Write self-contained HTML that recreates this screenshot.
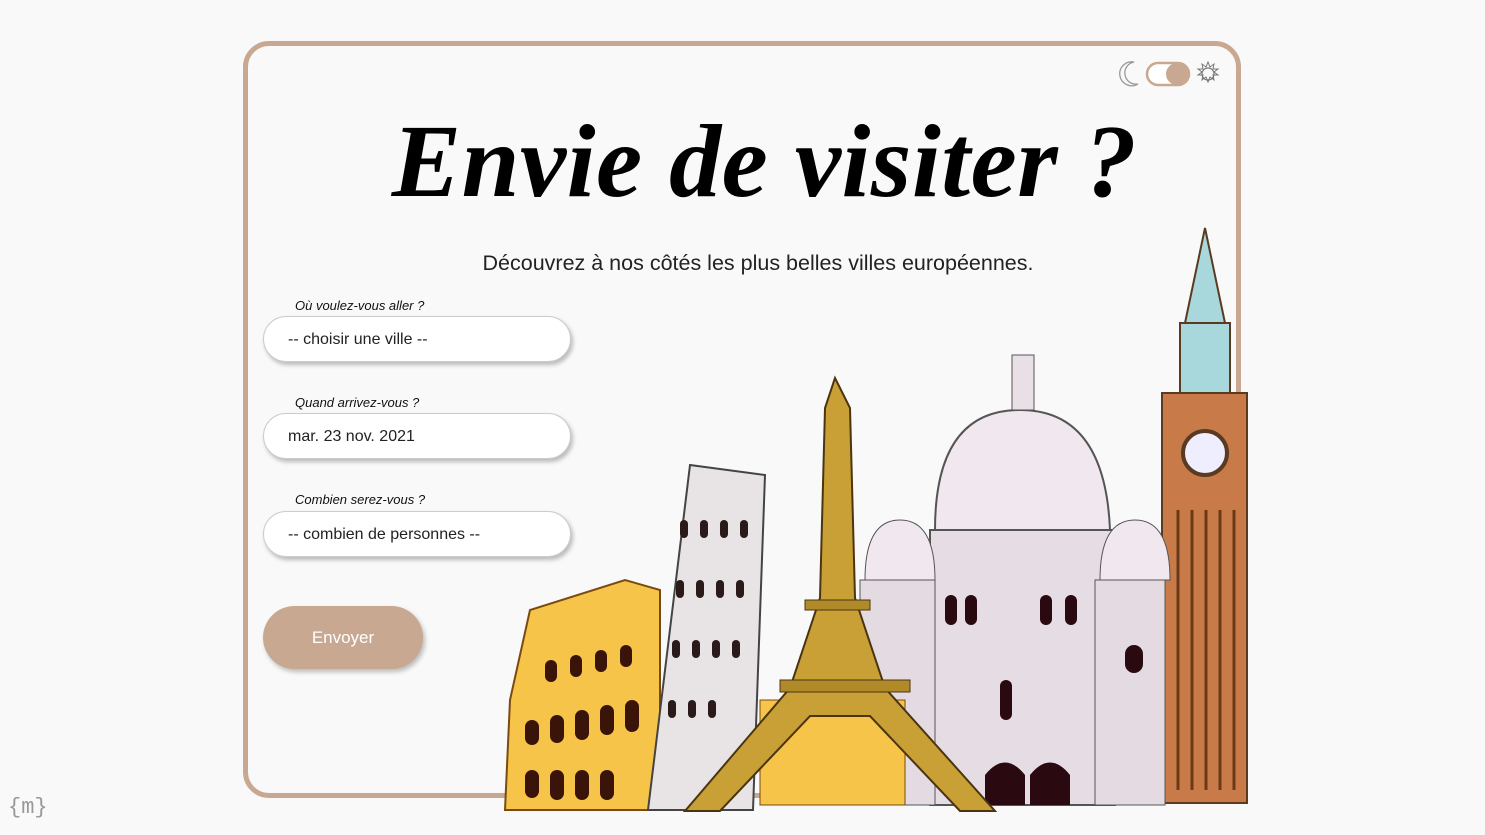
<!DOCTYPE html>
<html><head><meta charset="utf-8"><style>
html,body{margin:0;padding:0;width:1485px;height:835px;background:#f9f9f9;overflow:hidden;font-family:"Liberation Sans",sans-serif;position:relative}
.card{position:absolute;left:243px;top:41px;width:988px;height:747px;border:5px solid #c8a890;border-radius:26px;background:#f9f9f9}
h1{position:absolute;left:22px;width:1485px;top:102px;margin:0;text-align:center;font-family:"Liberation Serif",serif;font-style:italic;font-weight:bold;font-size:104px;letter-spacing:0.5px;color:#000}
.sub{position:absolute;left:0;width:1516px;top:251px;text-align:center;font-size:21.5px;color:#222}
.lbl{position:absolute;left:295px;font-size:13px;font-style:italic;color:#111}
.inp{position:absolute;left:263px;width:308px;height:46px;border:1px solid #ccc;border-radius:24px;background:#fff;box-shadow:2px 3px 4px rgba(0,0,0,.25);box-sizing:border-box;padding-left:24px;line-height:46px;font-size:16px;color:#222}
.btn{position:absolute;left:263px;top:606px;width:160px;height:63px;border-radius:32px;background:#c8a890;color:#fff;font-size:17px;text-align:center;line-height:63px;box-shadow:2px 3px 5px rgba(0,0,0,.25)}
.logo{position:absolute;left:8px;top:795px;font-size:22px;color:#999;font-family:"Liberation Mono",monospace}
</style></head><body>
<div class="card"></div>
<svg style="position:absolute;left:1110px;top:58px" width="120" height="32">
<path d="M24 4a12 12 0 1 0 4 22a11 11 0 0 1 -4 -22z" fill="none" stroke="#999" stroke-width="1.3"/>
<rect x="37" y="5" width="42" height="22" rx="11" fill="#fff" stroke="#c8a890" stroke-width="2.5"/>
<circle cx="67" cy="16" r="11" fill="#c8a890"/>
<circle cx="98" cy="16" r="6" fill="none" stroke="#777" stroke-width="1.2"/>
<path d="M98 4l2 5 4-3-1 5 5 0-4 3 4 3-5 0 1 5-4-3-2 5-2-5-4 3 1-5-5 0 4-3-4-3 5 0-1-5 4 3z" fill="none" stroke="#777" stroke-width="1"/>
</svg>
<h1>Envie de visiter ?</h1>
<div class="sub">Découvrez à nos côtés les plus belles villes européennes.</div>
<div class="lbl" style="top:298px">Où voulez-vous aller ?</div>
<div class="inp" style="top:316px">-- choisir une ville --</div>
<div class="lbl" style="top:395px">Quand arrivez-vous ?</div>
<div class="inp" style="top:413px">mar. 23 nov. 2021</div>
<div class="lbl" style="top:492px">Combien serez-vous ?</div>
<div class="inp" style="top:511px">-- combien de personnes --</div>
<div class="btn">Envoyer</div>
<svg style="position:absolute;left:0;top:0" width="1485" height="835">
<path d="M1205 228l-20 95h40z" fill="#a8d8dc" stroke="#5a3a20" stroke-width="2"/>
<rect x="1180" y="323" width="50" height="70" fill="#a8d8dc" stroke="#5a3a20" stroke-width="2"/>
<rect x="1162" y="393" width="85" height="410" fill="#c87a48" stroke="#5a3a20" stroke-width="2"/>
<circle cx="1205" cy="453" r="22" fill="#eef" stroke="#5a3a20" stroke-width="4"/>
<g stroke="#6a3a18" stroke-width="3">
<path d="M1178 510v280M1192 510v280M1206 510v280M1220 510v280M1234 510v280"/></g>
<path d="M935 530q0-120 85-120q85 0 90 120z" fill="#f0e8ee" stroke="#555" stroke-width="2"/>
<rect x="1012" y="355" width="22" height="55" fill="#e8e0e6" stroke="#555"/>
<rect x="930" y="530" width="185" height="275" fill="#e6dde4" stroke="#555" stroke-width="2"/>
<path d="M865 580q0-60 35-60q35 0 35 60z" fill="#f0e8ee" stroke="#555"/>
<path d="M1100 580q0-60 35-60q35 0 35 60z" fill="#f0e8ee" stroke="#555"/>
<rect x="860" y="580" width="75" height="225" fill="#e4dae2" stroke="#555"/>
<rect x="1095" y="580" width="70" height="225" fill="#e4dae2" stroke="#555"/>
<g fill="#2a0a10"><rect x="945" y="595" width="12" height="30" rx="6"/><rect x="965" y="595" width="12" height="30" rx="6"/><rect x="1040" y="595" width="12" height="30" rx="6"/><rect x="1065" y="595" width="12" height="30" rx="6"/><rect x="1000" y="680" width="12" height="40" rx="6"/><path d="M985 805v-30q20-25 40 0v30z"/><path d="M1030 805v-30q20-25 40 0v30z"/><rect x="1125" y="645" width="18" height="28" rx="9"/></g>
<path d="M510 700l20-90 95-30 35 10v220l-155 0z" fill="#f5c448" stroke="#7a4a10" stroke-width="2"/>
<g fill="#3a1408"><rect x="525" y="720" width="14" height="25" rx="7"/><rect x="550" y="715" width="14" height="28" rx="7"/><rect x="575" y="710" width="14" height="30" rx="7"/><rect x="600" y="705" width="14" height="30" rx="7"/><rect x="625" y="700" width="14" height="32" rx="7"/><rect x="525" y="770" width="14" height="28" rx="7"/><rect x="550" y="770" width="14" height="30" rx="7"/><rect x="575" y="770" width="14" height="30" rx="7"/><rect x="600" y="770" width="14" height="30" rx="7"/><rect x="545" y="660" width="12" height="22" rx="6"/><rect x="570" y="655" width="12" height="22" rx="6"/><rect x="595" y="650" width="12" height="22" rx="6"/><rect x="620" y="645" width="12" height="22" rx="6"/></g>
<path d="M690 465l75 10-12 335h-105z" fill="#e8e4e6" stroke="#444" stroke-width="2"/>
<g fill="#2a1a1a"><rect x="680" y="520" width="8" height="18" rx="4"/><rect x="700" y="520" width="8" height="18" rx="4"/><rect x="720" y="520" width="8" height="18" rx="4"/><rect x="740" y="520" width="8" height="18" rx="4"/><rect x="676" y="580" width="8" height="18" rx="4"/><rect x="696" y="580" width="8" height="18" rx="4"/><rect x="716" y="580" width="8" height="18" rx="4"/><rect x="736" y="580" width="8" height="18" rx="4"/><rect x="672" y="640" width="8" height="18" rx="4"/><rect x="692" y="640" width="8" height="18" rx="4"/><rect x="712" y="640" width="8" height="18" rx="4"/><rect x="732" y="640" width="8" height="18" rx="4"/><rect x="668" y="700" width="8" height="18" rx="4"/><rect x="688" y="700" width="8" height="18" rx="4"/><rect x="708" y="700" width="8" height="18" rx="4"/></g>
<rect x="760" y="700" width="145" height="105" fill="#f5c448" stroke="#7a4a10"/>
<path d="M835 378l-10 30-5 190-30 90-105 123h35l90-95 60 0 90 95h35l-110-123-30-90-5-190z" fill="#c9a036" stroke="#4a3510" stroke-width="2"/>
<rect x="780" y="680" width="130" height="12" fill="#b08a28" stroke="#4a3510"/>
<rect x="805" y="600" width="65" height="10" fill="#b08a28" stroke="#4a3510"/>
</svg>
<div class="logo">{m}</div>
</body></html>
